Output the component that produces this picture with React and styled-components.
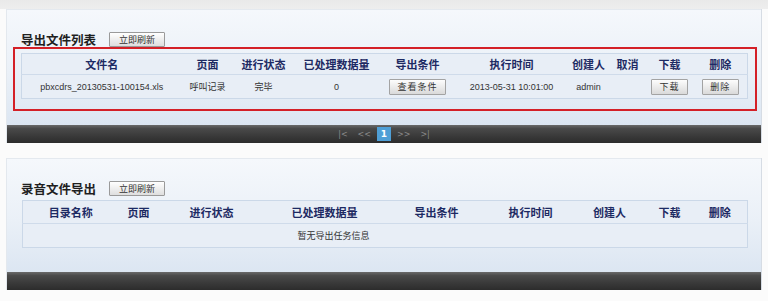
import React from 'react';
import styled, { createGlobalStyle } from 'styled-components';

const GlobalStyle = createGlobalStyle`
  html, body {
    margin: 0;
    padding: 0;
    background: #fbfbfb;
    font-family: "Liberation Sans", Arial, "Noto Sans CJK SC", sans-serif;
  }
`;

const exportCols = [160, 52, 60, 86, 76, 112, 42, 36, 48, 54];
const recordCols = [96, 40, 106, 120, 104, 84, 74, 46, 55];

const App = () => {
  return (
    <Page>
      <GlobalStyle />
      <TopStrip />
      <Panel>
        <PanelBody $height={116}>
          <TitleRow>
            <Title>导出文件列表</Title>
            <SmallButton>立即刷新</SmallButton>
          </TitleRow>
          <Highlight>
            <Grid>
              <colgroup>
                {exportCols.map((w, i) => <col key={i} style={{ width: w }} />)}
              </colgroup>
              <thead>
                <tr>
                  <Th>文件名</Th>
                  <Th>页面</Th>
                  <Th>进行状态</Th>
                  <Th>已处理数据量</Th>
                  <Th>导出条件</Th>
                  <Th>执行时间</Th>
                  <Th>创建人</Th>
                  <Th>取消</Th>
                  <Th>下载</Th>
                  <Th>删除</Th>
                </tr>
              </thead>
              <tbody>
                <tr>
                  <Td>pbxcdrs_20130531-100154.xls</Td>
                  <Td>呼叫记录</Td>
                  <Td>完毕</Td>
                  <Td>0</Td>
                  <Td><RowButton $w={57}>查看条件</RowButton></Td>
                  <Td>2013-05-31 10:01:00</Td>
                  <Td>admin</Td>
                  <Td></Td>
                  <Td><RowButton $w={37}>下载</RowButton></Td>
                  <Td><RowButton $w={37}>删除</RowButton></Td>
                </tr>
              </tbody>
            </Grid>
          </Highlight>
        </PanelBody>
        <Pager>
          <PageLink>|&lt;</PageLink>
          <PageLink>&lt;&lt;</PageLink>
          <PageCurrent>1</PageCurrent>
          <PageLink>&gt;&gt;</PageLink>
          <PageLink>&gt;|</PageLink>
        </Pager>
      </Panel>

      <Panel $gap={15}>
        <PanelBody $height={114}>
          <TitleRow>
            <Title>录音文件导出</Title>
            <SmallButton>立即刷新</SmallButton>
          </TitleRow>
          <Grid $indent={15} $top={4}>
            <colgroup>
              {recordCols.map((w, i) => <col key={i} style={{ width: w }} />)}
            </colgroup>
            <thead>
              <tr>
                <Th $h={22}>目录名称</Th>
                <Th $h={22}>页面</Th>
                <Th $h={22}>进行状态</Th>
                <Th $h={22}>已处理数据量</Th>
                <Th $h={22}>导出条件</Th>
                <Th $h={22}>执行时间</Th>
                <Th $h={22}>创建人</Th>
                <Th $h={22}>下载</Th>
                <Th $h={22}>删除</Th>
              </tr>
            </thead>
            <tbody>
              <tr>
                <EmptyCell colSpan={9}>暂无导出任务信息</EmptyCell>
              </tr>
            </tbody>
          </Grid>
        </PanelBody>
        <Pager />
      </Panel>
    </Page>
  );
};

const Page = styled.div`
  width: 768px;
  height: 301px;
  overflow: hidden;
`;

const TopStrip = styled.div`
  height: 9px;
  background: linear-gradient(#e9e9e9, #eeeeee);
`;

const Panel = styled.section`
  margin: ${p => p.$gap || 0}px 0 0 6px;
  width: 756px;
  border-right: 1px solid #d6dce4;
  border-left: 1px solid #e3e8ee;
  box-sizing: border-box;
`;

const PanelBody = styled.div`
  height: ${p => p.$height}px;
  box-sizing: border-box;
  padding-top: 22px;
  background: linear-gradient(#f5f8fc, #eaf0f7 55%, #dce6f2);
  border-top: 1px solid #e4e9ef;
`;

const TitleRow = styled.div`
  display: flex;
  align-items: center;
  gap: 13px;
  height: 15px;
  padding-left: 14px;
`;

const Title = styled.h2`
  margin: 0;
  font-family: "Noto Sans CJK SC", sans-serif;
  font-size: 12.5px;
  font-weight: 700;
  color: #1f1f1f;
  letter-spacing: 0px;
`;

const SmallButton = styled.button`
  width: 56px;
  height: 15px;
  padding: 0;
  border: 1px solid #9a9a9a;
  border-radius: 1px;
  background: linear-gradient(#ffffff, #dedede);
  font-family: "Noto Sans CJK SC", sans-serif;
  font-size: 9px;
  color: #333;
  line-height: 13px;
`;

const Highlight = styled.div`
  margin: 0 0 0 6px;
  width: 744px;
  height: 64px;
  box-sizing: border-box;
  border: 2px solid #d42027;
  padding: 4px 0 0 6px;
`;

const Grid = styled.table`
  table-layout: fixed;
  border-collapse: collapse;
  width: ${p => (p.$indent ? 725 : 726)}px;
  margin: ${p => p.$top || 0}px 0 0 ${p => p.$indent || 0}px;
  background: #e8eef6;
  border: 1px solid #cbd8e8;
`;

const Th = styled.th`
  height: ${p => p.$h || 20}px;
  padding: 0;
  font-family: "Noto Sans CJK SC", sans-serif;
  font-size: 11px;
  font-weight: 700;
  color: #1d2a63;
  text-align: center;
  border-bottom: 1px solid #cfdbea;
  white-space: nowrap;
`;

const Td = styled.td`
  height: 23px;
  padding: 0;
  font-family: "Liberation Sans", Arial, "Noto Sans CJK SC", sans-serif;
  font-size: 9px;
  color: #333;
  text-align: center;
  white-space: nowrap;
`;

const EmptyCell = styled.td`
  height: 23px;
  padding: 0 103px 0 0;
  font-family: "Noto Sans CJK SC", sans-serif;
  font-size: 9px;
  color: #333;
  text-align: center;
`;

const RowButton = styled.button`
  width: ${p => p.$w}px;
  height: 16px;
  padding: 0;
  border: 1px solid #a3a3a3;
  border-radius: 1px;
  background: linear-gradient(#fdfdfd, #dadada);
  font-family: "Noto Sans CJK SC", sans-serif;
  font-size: 9px;
  letter-spacing: 1px;
  color: #333;
  line-height: 14px;
  vertical-align: middle;
`;

const Pager = styled.div`
  height: 18px;
  display: flex;
  align-items: center;
  justify-content: center;
  gap: 10px;
  background: linear-gradient(#6a6a6a, #4a4a4a 20%, #3a3a3a 60%, #2c2c2c);
`;

const PageLink = styled.span`
  font-family: "DejaVu Sans", sans-serif;
  font-size: 8px;
  color: #8a8a8a;
`;

const PageCurrent = styled.span`
  width: 14px;
  height: 14px;
  margin: 0 -4px;
  display: flex;
  align-items: center;
  justify-content: center;
  background: #4f9fd6;
  font-family: "DejaVu Sans", sans-serif;
  font-size: 9px;
  font-weight: 700;
  color: #ffffff;
`;

export default App;
